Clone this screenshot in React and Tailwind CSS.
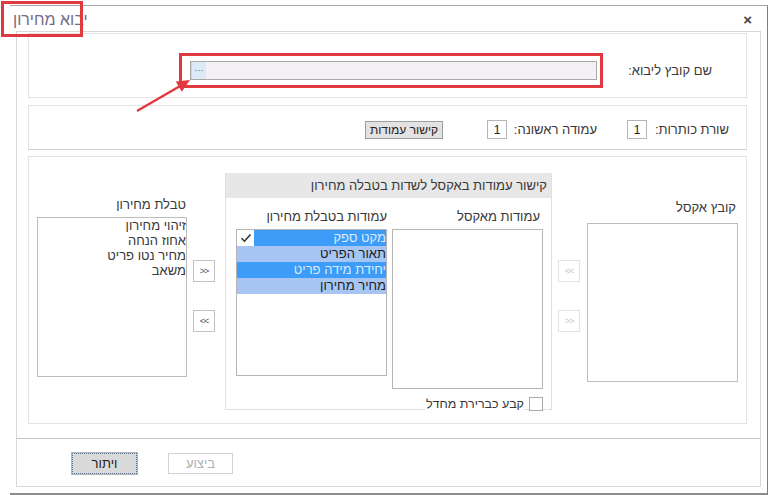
import React from "react";

function ArrowBtn({ label, disabled }) {
  return (
    <div
      dir="ltr"
      className={
        "w-[22px] h-[22px] flex items-center justify-center text-[9px] leading-none tracking-[-1px] border bg-white " +
        (disabled ? "border-[#e3e3e3] text-[#c8c8c8]" : "border-[#c2c2c2] text-[#555]")
      }
    >
      {label}
    </div>
  );
}

function Check() {
  return (
    <svg width="12" height="10" viewBox="0 0 12 10">
      <path d="M1.5 5.2 L4.5 8.2 L10.5 1.5" fill="none" stroke="#333" strokeWidth="1.6" />
    </svg>
  );
}

export default function App() {
  return (
    <div
      dir="rtl"
      className="relative w-[768px] h-[495px] bg-white overflow-hidden font-['Liberation_Sans','DejaVu_Sans',sans-serif] text-[13px] leading-[16px] text-[#383838]"
    >
      {/* window frame */}
      <div className="mt-[5px] ml-[10px] w-[758px] h-[490px] border-t border-t-[#a6a6a6] border-r border-r-[#7e7e7e] border-b-2 border-b-[#8c8c8c] flex flex-col">
        {/* header */}
        <div dir="ltr" className="h-[25px] shrink-0 flex items-center justify-between pl-[3px] pr-[15px]">
          <span className="mt-[3px] text-[16px] text-[#77698a] leading-none">יבוא מחירון</span>
          <span className="mt-[2px] text-[15px] font-bold text-[#444] leading-none">×</span>
        </div>

        {/* body */}
        <div className="mr-[6px] w-[745px] h-[456px] shrink-0 border border-[#d9d9d9] flex flex-col">
          <div className="pr-[13px] pl-[11px] flex flex-col">
            {/* panel 1 */}
            <div className="mt-[1px] h-[65px] shrink-0 border border-[#e3e3e3] flex items-start pt-[19px] pr-[34px] pl-[150px]">
              <div className="flex items-center w-full">
                <div className="flex-1 text-right">שם קובץ ליבוא:</div>
                <div className="w-[424px] h-[35px] shrink-0 border-[3px] border-[#e0393f] flex items-center pl-[8px] pr-[3px]">
                  <div className="w-[407px] h-[19px] border border-[#a8a8a8] bg-[#f3f1f5] flex flex-row">
                    <div className="flex-1" />
                    <div dir="ltr" className="w-[15px] h-full bg-[#dce9f7] border-l border-[#c9d7e8] flex items-center justify-center text-[9px] text-[#556] leading-none">
                      ···
                    </div>
                  </div>
                </div>
              </div>
            </div>

            {/* panel 2 */}
            <div className="mt-[7px] h-[45px] shrink-0 border border-[#e3e3e3] border-b-[#d0d0d0] flex items-center pt-[4px]">
              <div className="w-[99px] shrink-0 pr-[17px] text-right whitespace-nowrap">שורת כותרות:</div>
              <div className="w-[20px] h-[19px] shrink-0 border border-[#b5b5b5] flex items-center justify-center text-[12px] text-[#222]">1</div>
              <div className="w-[120px] shrink-0 pr-[30px] text-right whitespace-nowrap">עמודה ראשונה:</div>
              <div className="w-[20px] h-[19px] shrink-0 border border-[#b5b5b5] flex items-center justify-center text-[12px] text-[#222]">1</div>
              <div className="mr-[44px] w-[78px] h-[18px] shrink-0 border border-[#9f9f9f] bg-[#e2e2e2] flex items-center justify-center text-[12px] text-[#222] whitespace-nowrap">
                קישור עמודות
              </div>
            </div>

            {/* panel 3 */}
            <div className="mt-[6px] h-[268px] shrink-0 border border-[#e3e3e3] flex items-start pr-[8px] pl-[8px]">
              {/* Excel file column */}
              <div className="w-[151px] mt-[43px] flex flex-col">
                <div className="h-[16px] text-right pr-[2px]">קובץ אקסל</div>
                <div className="mt-[7px] h-[159px] border border-[#bdbdbd]" />
              </div>
              <div className="mr-[7px] mt-[103px] flex flex-col gap-[28px]">
                <ArrowBtn label="<<" disabled />
                <ArrowBtn label=">>" disabled />
              </div>

              {/* group box */}
              <div className="mr-[6px] mt-[16px] w-[327px] h-[237px] border border-[#e0e0e0] border-t-0 flex flex-col">
                <div className="h-[25px] shrink-0 bg-[#e7e7e7] flex items-center pr-[4px]">
                  קישור עמודות באקסל לשדות בטבלה מחירון
                </div>
                <div className="pr-[8px] flex items-start shrink-0">
                  <div className="w-[151px] flex flex-col">
                    <div className="mt-[11px] h-[16px] text-right pr-[3px]">עמודות מאקסל</div>
                    <div className="mt-[4px] h-[160px] border border-[#b5b5b5]" />
                    <div className="mt-[8px] h-[14px] flex items-center">
                      <div className="w-[14px] h-[14px] shrink-0 border border-[#a9a9a9] bg-white" />
                      <span className="mr-[5px] text-[12.5px] leading-[14px] bg-white">קבע כברירת מחדל</span>
                    </div>
                  </div>
                  <div className="mr-[5px] w-[151px] flex flex-col">
                    <div className="mt-[11px] h-[16px] text-right">עמודות בטבלת מחירון</div>
                    <div className="mt-[4px] h-[147px] border border-[#b5b5b5] flex flex-col">
                      <div className="h-[16px] flex">
                        <div className="flex-1 bg-[#3d9cf7] text-[#d9ecff] text-right">מקט ספק</div>
                        <div className="w-[17px] bg-white flex items-center justify-center">
                          <Check />
                        </div>
                      </div>
                      <div className="h-[16px] bg-[#a7c5f2] text-[#1b1b1b] text-right">תאור הפריט</div>
                      <div className="h-[16px] bg-[#3d9cf7] text-[#d9ecff] text-right">יחידת מידה פריט</div>
                      <div className="h-[16px] bg-[#a7c5f2] text-[#1b1b1b] text-right">מחיר מחירון</div>
                    </div>
                  </div>
                </div>
              </div>

              <div className="mr-[10px] mt-[103px] flex flex-col gap-[28px]">
                <ArrowBtn label=">>" />
                <ArrowBtn label="<<" />
              </div>

              {/* price table column */}
              <div className="mr-[6px] w-[150px] mt-[40px] flex flex-col">
                <div className="h-[16px] text-right pr-[1px]">טבלת מחירון</div>
                <div className="mt-[4px] h-[160px] border border-[#bdbdbd] flex flex-col">
                  <div className="h-[15px] leading-[15px] text-right">זיהוי מחירון</div>
                  <div className="h-[15px] leading-[15px] text-right">אחוז הנחה</div>
                  <div className="h-[15px] leading-[15px] text-right">מחיר נטו פריט</div>
                  <div className="h-[15px] leading-[15px] text-right">משאב</div>
                </div>
              </div>
            </div>
          </div>

          {/* footer */}
          <div dir="ltr" className="mt-[14px] border-t border-[#c6c6c6] pt-[14px] pl-[55px] flex gap-[31px]">
            <div className="w-[65px] h-[21px] bg-[#dadada] border border-dotted border-[#56708f] outline outline-1 outline-[#b5b5b5] flex items-center justify-center text-[13px] text-[#222]">
              ויתור
            </div>
            <div className="w-[65px] h-[21px] bg-white border border-[#d2d2d2] flex items-center justify-center text-[13px] text-[#b0b0b0]">
              ביצוע
            </div>
          </div>
        </div>
      </div>

      {/* annotations */}
      <div className="absolute left-[1px] top-[1px] w-[82px] h-[36px] border-[3px] border-[#e0393f]" />
      <svg className="absolute left-0 top-0" width="200" height="120" viewBox="0 0 200 120">
        <line x1="137" y1="111" x2="181" y2="85.5" stroke="#e0393f" strokeWidth="2.5" />
        <polygon points="190,80 181.8,91.8 175.8,81.4" fill="#e0393f" />
      </svg>
    </div>
  );
}
